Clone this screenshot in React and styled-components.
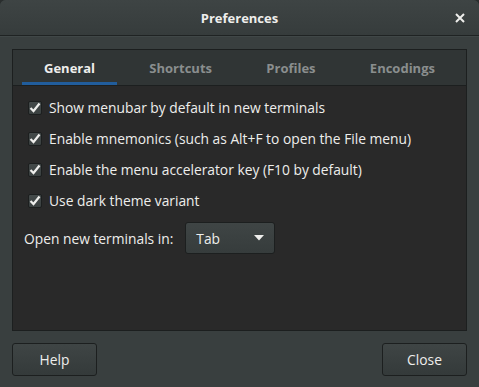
import styled, { createGlobalStyle } from "styled-components";

const Global = createGlobalStyle`
  html, body {
    margin: 0;
    padding: 0;
    background: #2a2e2e;
  }
  body {
    font-family: "Open Sans", "DejaVu Sans", sans-serif;
    font-size: 13px;
    color: #eeeeec;
  }
`;

const Window = styled.div`
  width: 479px;
  height: 387px;
  display: flex;
  flex-direction: column;
  background: #393f3f;
  border-radius: 6px 6px 0 0;
  overflow: hidden;
`;

const TitleBar = styled.div`
  height: 35px;
  flex: none;
  display: flex;
  align-items: center;
  justify-content: center;
  position: relative;
  background: linear-gradient(#3e4444, #363c3c);
  border-bottom: 1px solid #1f2323;
  box-shadow: 0 1px 0 #404747;
`;

const Title = styled.div`
  font-weight: 700;
  font-size: 13px;
  color: #eeeeec;
`;

const CloseX = styled.button`
  position: absolute;
  right: 10px;
  top: 9px;
  width: 18px;
  height: 18px;
  padding: 0;
  border: none;
  background: none;
  display: flex;
  align-items: center;
  justify-content: center;
`;

const Body = styled.div`
  flex: 1;
  display: flex;
  flex-direction: column;
  padding: 13px 12px 12px 12px;
`;

const Notebook = styled.div`
  height: 280px;
  display: flex;
  flex-direction: column;
  border: 1px solid #1c1f1f;
  background: #292929;
`;

const TabBar = styled.div`
  height: 35px;
  flex: none;
  display: flex;
  justify-content: space-between;
  padding: 0 9px;
  background: #303535;
  border-bottom: 1px solid #1c1f1f;
`;

const Tab = styled.div`
  padding: 0 22px;
  display: flex;
  align-items: center;
  font-weight: 700;
  color: ${(p) => (p.$active ? "#eeeeec" : "#8a8e8e")};
  box-shadow: ${(p) => (p.$active ? "inset 0 -3px 0 #215d9c" : "none")};
`;

const Content = styled.div`
  display: flex;
  flex-direction: column;
  padding: 6px 11px 0 11px;
  font-size: 13.8px;
`;

const CheckRow = styled.label`
  display: flex;
  align-items: center;
  gap: 7px;
  height: 31px;
  padding-left: 4px;
`;

const Box = styled.span`
  width: 14px;
  height: 14px;
  border-radius: 2px;
  border: 1px solid #1c1f1f;
  background: linear-gradient(#444a4a, #3a4040);
  box-sizing: border-box;
  display: flex;
  align-items: center;
  justify-content: center;
`;

const ComboRow = styled.div`
  display: flex;
  align-items: center;
  gap: 12px;
  margin-top: 6px;
`;

const Combo = styled.div`
  width: 90px;
  height: 32px;
  box-sizing: border-box;
  display: flex;
  align-items: center;
  justify-content: space-between;
  padding: 0 10px 0 10px;
  border: 1px solid #1c1f1f;
  border-radius: 3px;
  background: linear-gradient(#3f4545, #363c3c);
`;

const Footer = styled.div`
  display: flex;
  justify-content: space-between;
  margin-top: 12px;
`;

const Button = styled.button`
  width: ${(p) => p.$w}px;
  height: 33px;
  border: 1px solid #1c1f1f;
  border-radius: 3px;
  background: linear-gradient(#3f4545, #343a3a);
  color: #eeeeec;
  font-family: inherit;
  font-size: 13.8px;
`;

const Check = () => (
  <svg width="12" height="11" viewBox="0 0 12 11">
    <path d="M1.5 6 L4.5 9 L10.5 1.5" fill="none" stroke="#eeeeec" strokeWidth="2.2" />
  </svg>
);

const options = [
  "Show menubar by default in new terminals",
  "Enable mnemonics (such as Alt+F to open the File menu)",
  "Enable the menu accelerator key (F10 by default)",
  "Use dark theme variant",
];

export default function App() {
  return (
    <Window>
      <Global />
      <TitleBar>
        <Title>Preferences</Title>
        <CloseX>
          <svg width="10" height="10" viewBox="0 0 10 10">
            <path d="M1 1 L9 9 M9 1 L1 9" stroke="#eeeeec" strokeWidth="2" />
          </svg>
        </CloseX>
      </TitleBar>
      <Body>
        <Notebook>
          <TabBar>
            <Tab $active>General</Tab>
            <Tab>Shortcuts</Tab>
            <Tab>Profiles</Tab>
            <Tab>Encodings</Tab>
          </TabBar>
          <Content>
            {options.map((o) => (
              <CheckRow key={o}>
                <Box>
                  <Check />
                </Box>
                {o}
              </CheckRow>
            ))}
            <ComboRow>
              <span>Open new terminals in:</span>
              <Combo>
                <span>Tab</span>
                <svg width="10" height="6" viewBox="0 0 10 6">
                  <path d="M0 0 H10 L5 5.5 Z" fill="#eeeeec" />
                </svg>
              </Combo>
            </ComboRow>
          </Content>
        </Notebook>
        <Footer>
          <Button $w={85}>Help</Button>
          <Button $w={85}>Close</Button>
        </Footer>
      </Body>
    </Window>
  );
}
